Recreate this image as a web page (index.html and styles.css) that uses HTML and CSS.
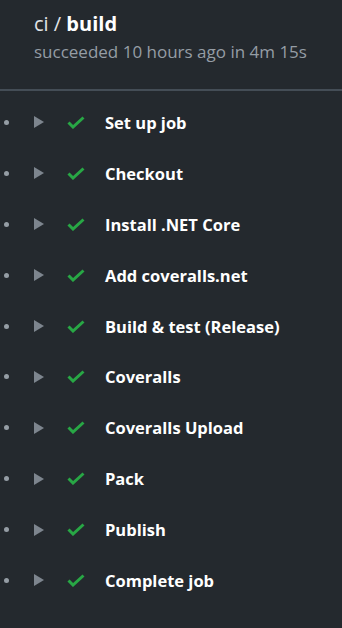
FILE: index.html
```html
<!DOCTYPE html>
<html lang="en">
<head>
  <meta charset="UTF-8" />
  <title>ci / build</title>
  <link rel="stylesheet" href="styles.css">
</head>
<body>

  <header class="job-head">
    <h1><span class="wf">ci /</span> build</h1>
    <p>succeeded 10 hours ago in 4m 15s</p>
  </header>

  <ul class="steps">
    <li class="step"><span class="dot"></span><span class="caret"></span><svg class="check" viewBox="0 0 18 13"><polyline points="1.5,6.5 6,11 16.5,1.5"/></svg><span class="name">Set up job</span></li>
    <li class="step"><span class="dot"></span><span class="caret"></span><svg class="check" viewBox="0 0 18 13"><polyline points="1.5,6.5 6,11 16.5,1.5"/></svg><span class="name">Checkout</span></li>
    <li class="step"><span class="dot"></span><span class="caret"></span><svg class="check" viewBox="0 0 18 13"><polyline points="1.5,6.5 6,11 16.5,1.5"/></svg><span class="name">Install .NET Core</span></li>
    <li class="step"><span class="dot"></span><span class="caret"></span><svg class="check" viewBox="0 0 18 13"><polyline points="1.5,6.5 6,11 16.5,1.5"/></svg><span class="name">Add coveralls.net</span></li>
    <li class="step"><span class="dot"></span><span class="caret"></span><svg class="check" viewBox="0 0 18 13"><polyline points="1.5,6.5 6,11 16.5,1.5"/></svg><span class="name">Build &amp; test (Release)</span></li>
    <li class="step"><span class="dot"></span><span class="caret"></span><svg class="check" viewBox="0 0 18 13"><polyline points="1.5,6.5 6,11 16.5,1.5"/></svg><span class="name">Coveralls</span></li>
    <li class="step"><span class="dot"></span><span class="caret"></span><svg class="check" viewBox="0 0 18 13"><polyline points="1.5,6.5 6,11 16.5,1.5"/></svg><span class="name">Coveralls Upload</span></li>
    <li class="step"><span class="dot"></span><span class="caret"></span><svg class="check" viewBox="0 0 18 13"><polyline points="1.5,6.5 6,11 16.5,1.5"/></svg><span class="name">Pack</span></li>
    <li class="step"><span class="dot"></span><span class="caret"></span><svg class="check" viewBox="0 0 18 13"><polyline points="1.5,6.5 6,11 16.5,1.5"/></svg><span class="name">Publish</span></li>
    <li class="step"><span class="dot"></span><span class="caret"></span><svg class="check" viewBox="0 0 18 13"><polyline points="1.5,6.5 6,11 16.5,1.5"/></svg><span class="name">Complete job</span></li>
  </ul>

</body>
</html>
```

FILE: styles.css
```css
body {
  margin: 0;
  font-family: 'Open Sans', 'Noto Sans', sans-serif;
  background-color: #24292e;
  color: #fff;
}

.job-head {
  padding: 9px 0 0 34px;
  height: 80px;
  border-bottom: 2px solid #444d56;
}

.job-head h1 {
  margin: 0;
  font-size: 20px;
  font-weight: 700;
  line-height: 30px;
  color: #fff;
}

.job-head .wf {
  font-weight: 400;
  color: #e1e4e8;
}

.job-head p {
  margin: 0;
  font-size: 17px;
  line-height: 26px;
  color: #959da5;
}

.steps {
  list-style: none;
  margin: 0;
  padding: 6px 0 0;
}

.step {
  display: flex;
  align-items: center;
  height: 50.9px;
}

.dot {
  width: 5px;
  height: 5px;
  border-radius: 50%;
  background-color: #959da5;
  margin-left: 4px;
}

.caret {
  width: 0;
  height: 0;
  border-top: 6px solid transparent;
  border-bottom: 6px solid transparent;
  border-left: 10px solid #7d858e;
  margin-left: 25px;
}

.check {
  width: 18px;
  height: 13px;
  fill: none;
  stroke: #28a745;
  stroke-width: 3;
  margin-left: 23px;
}

.name {
  margin-left: 20px;
  font-size: 16.5px;
  font-weight: 700;
  color: #fff;
}
```
